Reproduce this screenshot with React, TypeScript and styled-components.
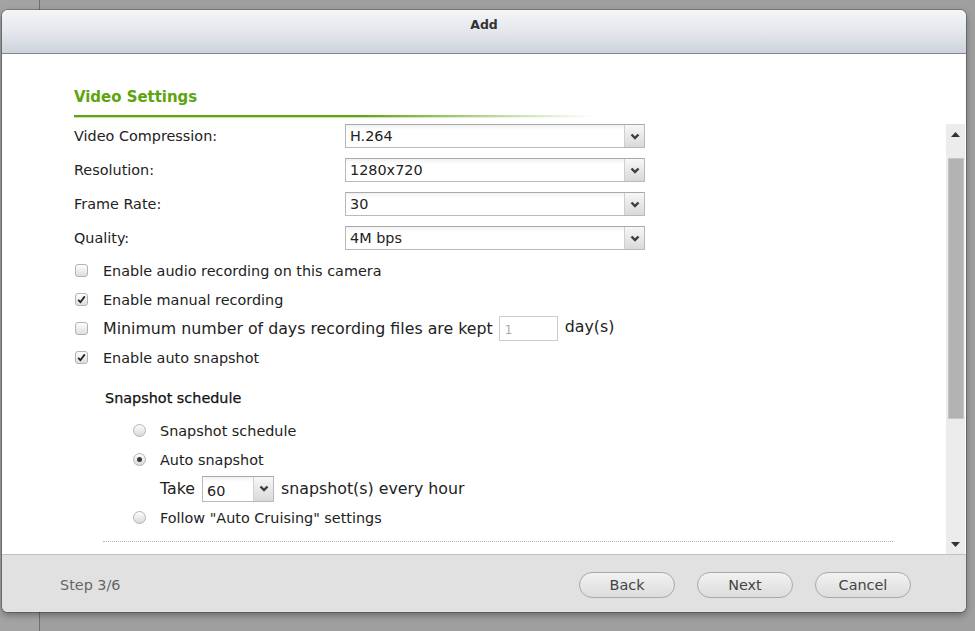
import styled, { createGlobalStyle } from "styled-components";

const GlobalStyle = createGlobalStyle`
  html, body {
    margin: 0;
    padding: 0;
  }
  body {
    width: 975px;
    height: 631px;
    overflow: hidden;
    background: linear-gradient(to right, #a3a3a3 0 39px, #707070 39px 40px, #9f9f9f 40px);
    font-family: "DejaVu Sans", Verdana, sans-serif;
  }
`;

const Page = styled.div`
  padding: 10px 0 0 2px;
`;

const Dialog = styled.div`
  width: 964px;
  height: 602px;
  display: flex;
  flex-direction: column;
  background: #fff;
  border-radius: 6px;
  overflow: hidden;
  box-shadow: 0 0 0 1px rgba(0, 0, 0, 0.22), 0 3px 7px rgba(0, 0, 0, 0.35);
`;

const Header = styled.div`
  height: 44px;
  flex: none;
  box-sizing: border-box;
  padding-top: 7px;
  border-bottom: 1px solid #7f8791;
  background: linear-gradient(#f4f5f7, #e2e6eb 55%, #ccd3dc);
  text-align: center;
  font-size: 12.5px;
  font-weight: bold;
  line-height: 16px;
  color: #333;
`;

const Body = styled.div`
  height: 500px;
  flex: none;
  display: flex;
  overflow: hidden;
`;

const Main = styled.div`
  flex: 1;
  padding: 33px 0 0 72px;
  font-size: 14.4px;
  color: #222;
`;

const Title = styled.div`
  font-family: "DejaVu Sans Condensed", "Liberation Sans", sans-serif;
  font-weight: bold;
  font-size: 16.6px;
  line-height: 20px;
  color: #5ea40f;
`;

const TitleRule = styled.div`
  margin-top: 8px;
  width: 520px;
  height: 3px;
  background:
    linear-gradient(to right, rgba(255, 255, 255, 0) 55%, #fff 100%),
    linear-gradient(#5fa512 0 2px, #c7e4a4 2px 3px);
`;

const SelectRows = styled.div`
  margin-top: 6px;
  display: flex;
  flex-direction: column;
  gap: 10px;
`;

const FieldRow = styled.div`
  display: flex;
  align-items: center;
  height: 24px;
`;

const Label = styled.div`
  width: 271px;
`;

const SelectBox = styled.div<{ $w: number; $h: number }>`
  width: ${(p) => p.$w}px;
  height: ${(p) => p.$h}px;
  box-sizing: border-box;
  display: flex;
  border: 1px solid #b9b9b9;
  border-top-color: #a9a9a9;
  background: linear-gradient(#f1f1f1, #fff 5px);
`;

const SelectValue = styled.div<{ $drop?: number }>`
  flex: 1;
  display: flex;
  align-items: center;
  padding: ${(p) => p.$drop ?? 0}px 0 0 4px;
  font-size: 14.4px;
  color: #222;
`;

const SelectArrow = styled.div`
  width: 19px;
  display: flex;
  align-items: center;
  justify-content: center;
  border-left: 1px solid #cfcfcf;
  background: linear-gradient(#f7f7f7, #d9d9d9);
`;

const CheckRows = styled.div`
  margin-top: 6px;
`;

const OptionRow = styled.div`
  display: flex;
  align-items: center;
  height: 29px;
`;

const BigText = styled.span`
  font-size: 15.8px;
`;

const CheckBox = styled.div`
  width: 13px;
  height: 13px;
  box-sizing: border-box;
  margin: 0 15px 0 1px;
  border: 1px solid #b3b3b3;
  border-radius: 3px;
  background: linear-gradient(#fdfdfd, #dedede);
  display: flex;
  align-items: center;
  justify-content: center;
`;

const Radio = styled.div`
  width: 13px;
  height: 13px;
  box-sizing: border-box;
  margin-right: 14px;
  border: 1px solid #b3b3b3;
  border-radius: 50%;
  background: linear-gradient(#fdfdfd, #dadada);
  display: flex;
  align-items: center;
  justify-content: center;
`;

const RadioDot = styled.div`
  width: 5px;
  height: 5px;
  border-radius: 50%;
  background: #3a3a3a;
`;

const DaysInput = styled.div`
  width: 59px;
  height: 25px;
  box-sizing: border-box;
  margin: 0 7px 0 6px;
  border: 1px solid #cdcdcd;
  font-size: 12px;
  color: #aaa;
  padding: 6px 0 0 5px;
`;

const Unit = styled(BigText)`
  margin-top: -5px;
`;

const SubHeading = styled.div`
  margin-top: 11px;
  height: 29px;
  display: flex;
  align-items: center;
  padding-left: 31px;
  color: #111;
  -webkit-text-stroke: 0.25px #111;
`;

const RadioList = styled.div`
  margin-top: 4px;
  padding-left: 59px;
`;

const TakeRow = styled.div`
  display: flex;
  align-items: center;
  height: 29px;
  padding-left: 27px;
  gap: 7px;
  font-size: 15.8px;
`;

const DottedRule = styled.div`
  margin: 9px 0 0 29px;
  width: 790px;
  border-top: 1px dotted #b5b5b5;
`;

const ScrollTrack = styled.div`
  width: 19px;
  margin: 70px 1px 0 0;
  background: #ececec;
  display: flex;
  flex-direction: column;
  align-items: center;
`;

const ScrollButton = styled.div`
  height: 20px;
  width: 100%;
  display: flex;
  align-items: center;
  justify-content: center;
`;

const ScrollThumb = styled.div`
  margin-top: 14px;
  width: 16px;
  height: 261px;
  box-sizing: border-box;
  background: #b3b3b3;
  border: 1px solid #c6c6c6;
`;

const ScrollSpace = styled.div`
  flex: 1;
`;

const Footer = styled.div`
  flex: 1;
  display: flex;
  align-items: center;
  border-top: 1px solid #c1c1c1;
  background: #e1e1e1;
  padding: 3px 55px 0 58px;
`;

const Step = styled.div`
  flex: 1;
  font-size: 14.4px;
  color: #666;
`;

const Buttons = styled.div`
  display: flex;
  gap: 22px;
`;

const PillButton = styled.div`
  width: 96px;
  height: 26px;
  box-sizing: border-box;
  border: 1px solid #a9a9a9;
  border-radius: 13px;
  background: linear-gradient(#f2f2f2, #dcdcdc);
  display: flex;
  align-items: center;
  justify-content: center;
  font-size: 14.4px;
  color: #444;
`;

const Chevron = () => (
  <svg width="10" height="7" viewBox="0 0 10 7">
    <path d="M1.5 1.5 L5 5 L8.5 1.5" fill="none" stroke="#3d3d3d" strokeWidth="2.4" />
  </svg>
);

const Tick = () => (
  <svg width="9" height="9" viewBox="0 0 9 9">
    <path d="M1.2 4.8 L3.4 7.2 L7.8 1.4" fill="none" stroke="#222" strokeWidth="1.8" />
  </svg>
);

const Triangle = ({ up }: { up?: boolean }) => (
  <svg width="9" height="5" viewBox="0 0 9 5">
    <path d={up ? "M0 5 L4.5 0 L9 5 Z" : "M0 0 L4.5 5 L9 0 Z"} fill="#333" />
  </svg>
);

const Select = ({ value, w, h, drop }: { value: string; w: number; h: number; drop?: number }) => (
  <SelectBox $w={w} $h={h}>
    <SelectValue $drop={drop}>{value}</SelectValue>
    <SelectArrow>
      <Chevron />
    </SelectArrow>
  </SelectBox>
);

const fields = [
  ["Video Compression:", "H.264"],
  ["Resolution:", "1280x720"],
  ["Frame Rate:", "30"],
  ["Quality:", "4M bps"],
];

export default function App() {
  return (
    <Page>
      <GlobalStyle />
      <Dialog>
        <Header>Add</Header>
        <Body>
          <Main>
            <Title>Video Settings</Title>
            <TitleRule />
            <SelectRows>
              {fields.map(([label, value]) => (
                <FieldRow key={label}>
                  <Label>{label}</Label>
                  <Select value={value} w={300} h={24} />
                </FieldRow>
              ))}
            </SelectRows>
            <CheckRows>
              <OptionRow>
                <CheckBox />
                Enable audio recording on this camera
              </OptionRow>
              <OptionRow>
                <CheckBox>
                  <Tick />
                </CheckBox>
                Enable manual recording
              </OptionRow>
              <OptionRow>
                <CheckBox />
                <BigText>Minimum number of days recording files are kept</BigText>
                <DaysInput>1</DaysInput>
                <Unit>day(s)</Unit>
              </OptionRow>
              <OptionRow>
                <CheckBox>
                  <Tick />
                </CheckBox>
                Enable auto snapshot
              </OptionRow>
            </CheckRows>
            <SubHeading>Snapshot schedule</SubHeading>
            <RadioList>
              <OptionRow>
                <Radio />
                Snapshot schedule
              </OptionRow>
              <OptionRow>
                <Radio>
                  <RadioDot />
                </Radio>
                Auto snapshot
              </OptionRow>
              <TakeRow>
                Take
                <Select value="60" w={72} h={26} drop={4} />
                snapshot(s) every hour
              </TakeRow>
              <OptionRow>
                <Radio />
                Follow "Auto Cruising" settings
              </OptionRow>
            </RadioList>
            <DottedRule />
          </Main>
          <ScrollTrack>
            <ScrollButton>
              <Triangle up />
            </ScrollButton>
            <ScrollThumb />
            <ScrollSpace />
            <ScrollButton>
              <Triangle />
            </ScrollButton>
          </ScrollTrack>
        </Body>
        <Footer>
          <Step>Step 3/6</Step>
          <Buttons>
            <PillButton>Back</PillButton>
            <PillButton>Next</PillButton>
            <PillButton>Cancel</PillButton>
          </Buttons>
        </Footer>
      </Dialog>
    </Page>
  );
}
